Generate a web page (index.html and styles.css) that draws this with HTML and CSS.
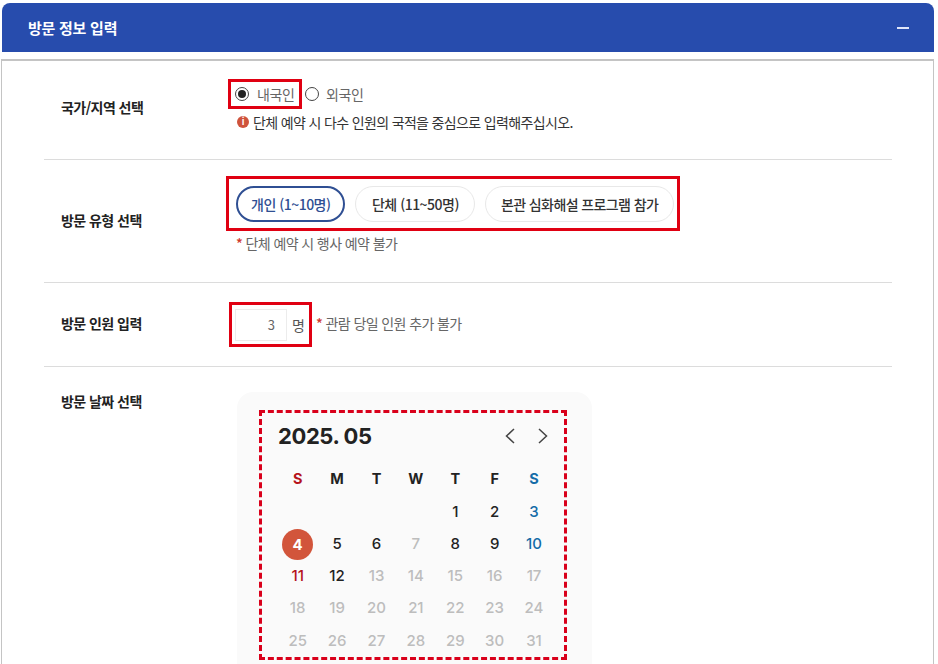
FILE: index.html
```html
<!DOCTYPE html>
<html lang="ko">
<head>
<meta charset="UTF-8" />
<meta name="viewport" content="width=device-width, initial-scale=1" />
<title>방문 정보 입력</title>
<link rel="stylesheet" href="styles.css">
</head>
<body>
<div class="page">
  <div class="head">
    <h2>방문 정보 입력</h2>
    <span class="fold"></span>
  </div>

  <div class="panel">
    <div class="row row-country">
      <div class="label">국가/지역 선택</div>
      <div class="field">
        <div class="radios">
          <div class="mark mark-radio">
            <span class="radio on"></span>
            <span class="radio-text">내국인</span>
          </div>
          <span class="radio"></span>
          <span class="radio-text">외국인</span>
        </div>
        <p class="info"><span class="info-icon">i</span>단체 예약 시 다수 인원의 국적을 중심으로 입력해주십시오.</p>
      </div>
    </div>

    <div class="row row-type">
      <div class="label">방문 유형 선택</div>
      <div class="field">
        <div class="mark mark-type">
          <button class="pill active">개인 (1~10명)</button>
          <button class="pill">단체 (11~50명)</button>
          <button class="pill pill-long">본관 심화해설 프로그램 참가</button>
        </div>
        <p class="note"><b>*</b> 단체 예약 시 행사 예약 불가</p>
      </div>
    </div>

    <div class="row row-count">
      <div class="label">방문 인원 입력</div>
      <div class="field count-field">
        <div class="mark mark-count">
          <span class="count-input">3</span>
          <span class="count-unit">명</span>
        </div>
        <p class="note"><b>*</b> 관람 당일 인원 추가 불가</p>
      </div>
    </div>

    <div class="row row-date">
      <div class="label">방문 날짜 선택</div>
      <div class="cal-card">
        <div class="cal-mark">
          <div class="cal-top">
            <strong>2025. 05</strong>
            <div class="cal-nav">
              <svg width="14" height="18" viewBox="0 0 14 18"><path d="M11 2 L3.5 9 L11 16" /></svg>
              <svg width="14" height="18" viewBox="0 0 14 18"><path d="M3 2 L10.5 9 L3 16" /></svg>
            </div>
          </div>
          <div class="cal-grid" id="calGrid"></div>
        </div>
      </div>
    </div>
  </div>
</div>

<script>
const calGrid = document.getElementById("calGrid");
const weekNames = ["S", "M", "T", "W", "T", "F", "S"];

weekNames.forEach((name, i) => {
  const cell = document.createElement("div");
  cell.className = "week";
  if (i === 0) cell.classList.add("sun");
  if (i === 6) cell.classList.add("sat");
  cell.textContent = name;
  calGrid.appendChild(cell);
});

// May 2025 starts on a Thursday
for (let i = 0; i < 4; i++) calGrid.appendChild(document.createElement("div"));

for (let day = 1; day <= 31; day++) {
  const cell = document.createElement("div");
  const weekday = (day + 3) % 7;
  cell.className = "day";
  if (day === 7 || day > 12) cell.classList.add("off");
  else if (weekday === 0) cell.classList.add("sun");
  else if (weekday === 6) cell.classList.add("sat");
  if (day === 4) cell.classList.add("picked");
  const num = document.createElement("span");
  num.textContent = day;
  cell.appendChild(num);
  calGrid.appendChild(cell);
}
</script>
</body>
</html>
```

FILE: styles.css
```css
html, body {
  margin: 0;
  padding: 0;
  height: 664px;
  overflow: hidden;
  background: #fff;
}
body {
  font-family: "Noto Sans CJK KR", "Noto Sans", sans-serif;
  color: #222;
}
.page {
  padding: 3px 4px 0 1px;
}
.head {
  margin-left: 1px;
  height: 49px;
  background: #274cad;
  border-radius: 8px 8px 0 0;
  display: flex;
  align-items: center;
  justify-content: space-between;
  padding: 0 25px 0 26px;
  box-sizing: border-box;
}
.head h2 {
  margin: 0;
  color: #fff;
  font-size: 15px;
  font-weight: 700;
  letter-spacing: -0.25px;
}
.fold {
  width: 12px;
  height: 2px;
  background: #dfe6fa;
}
.panel {
  margin-top: 7px;
  border: 1px solid #c4c4c4;
  border-top: 2px solid #c4c4c4;
  padding: 0 41px 0 42px;
}
.row {
  display: flex;
  border-bottom: 1px solid #dcdcdc;
  box-sizing: border-box;
}
.label {
  width: 182px;
  padding-left: 17px;
  box-sizing: border-box;
  font-size: 14px;
  font-weight: 700;
  letter-spacing: -0.55px;
  flex: none;
}
.row-country { height: 99px; padding-top: 18px; }
.row-country .label { padding-top: 18px; }
.row-type { height: 123px; padding-top: 16px; }
.row-type .label { padding-top: 34px; }
.row-count { height: 84px; padding-top: 19px; }
.row-count .label { padding-top: 11px; }
.row-date { border-bottom: 0; padding-top: 14px; }
.row-date .label { padding-top: 10px; }

.field { flex: 1; }
.mark {
  display: inline-flex;
  align-items: center;
  border: 3px solid #e00012;
  box-sizing: border-box;
}
.radios {
  display: flex;
  align-items: center;
  color: #666;
  margin-left: 2px;
}
.mark-radio {
  height: 30px;
  width: 74px;
  padding-left: 4px;
}
.radio {
  width: 14px;
  height: 14px;
  border: 1px solid #444;
  border-radius: 50%;
  background: #fff;
  box-sizing: border-box;
  flex: none;
  margin-left: 3px;
  display: flex;
  align-items: center;
  justify-content: center;
}
.radio.on::after {
  content: "";
  width: 8px;
  height: 8px;
  border-radius: 50%;
  background: #222;
}
.mark-radio .radio { margin-left: 0; }
.radio-text {
  font-size: 14px;
  margin-left: 7px;
  letter-spacing: -0.4px;
  color: #666;
}
.mark-radio .radio-text { margin-left: 8px; }
.info {
  margin: 3px 0 0 11px;
  font-size: 14px;
  letter-spacing: -0.65px;
  display: flex;
  align-items: center;
  color: #333;
}
.info-icon {
  width: 12px;
  height: 12px;
  border-radius: 50%;
  background: #cf533c;
  color: #fff;
  font-size: 9px;
  font-weight: 700;
  line-height: 12px;
  text-align: center;
  margin-right: 4px;
  letter-spacing: 0;
}
.mark-type {
  width: 454px;
  height: 55px;
  padding-left: 7px;
  gap: 10px;
}
.pill {
  height: 36px;
  padding: 0 15.5px;
  border: 1px solid #e8e8e8;
  border-radius: 18px;
  background: #fff;
  font-family: inherit;
  font-size: 14px;
  font-weight: 500;
  letter-spacing: -0.5px;
  color: #333;
  white-space: nowrap;
}
.pill-long {
  padding: 0 14.5px;
  letter-spacing: -0.6px;
}
.pill.active {
  border: 2px solid #2f4f93;
  color: #2f4f93;
  padding: 0 13px;
}
.note {
  margin: 2px 0 0 10px;
  font-size: 14px;
  letter-spacing: -0.6px;
  color: #666;
}
.note b { color: #cf3a2c; font-weight: 500; }
.count-field {
  display: flex;
  align-items: center;
  height: 45px;
}
.count-field .mark { margin-left: 3px; }
.count-field .note { margin: -4px 0 0 4px; }
.mark-count {
  width: 83px;
  height: 45px;
  padding: 3px 0 3px 3px;
}
.count-input {
  width: 52px;
  height: 32px;
  border: 1px solid #ececec;
  box-sizing: border-box;
  font-size: 13px;
  line-height: 30px;
  text-align: right;
  padding-right: 11px;
  color: #666;
  flex: none;
}
.count-unit {
  font-size: 14px;
  color: #555;
  margin-left: 5px;
}

.cal-card {
  width: 355px;
  height: 290px;
  margin-left: 11px;
  margin-top: 11px;
  background: #fafafa;
  border-radius: 16px;
  box-sizing: border-box;
  padding: 18px 0 0 22px;
}
.cal-mark {
  width: 308px;
  height: 250px;
  border: 3px dashed #d9001b;
  box-sizing: border-box;
  padding: 0 10px 0 16px;
  font-family: Inter, "Liberation Sans", sans-serif;
}
.cal-top {
  display: flex;
  align-items: center;
  justify-content: space-between;
  height: 44px;
  padding-top: 1px;
  box-sizing: border-box;
}
.cal-top strong {
  font-size: 22px;
  font-weight: 700;
  letter-spacing: -0.4px;
  color: #222;
}
.cal-nav {
  display: flex;
  gap: 19px;
  padding-right: 4px;
}
.cal-nav path {
  fill: none;
  stroke: #444;
  stroke-width: 1.5;
}
.cal-grid {
  display: grid;
  grid-template-columns: repeat(7, 39.4px);
  grid-template-rows: 33px 32px 32px 32px 32px 33px;
  margin-top: 6px;
  font-size: 15px;
  font-weight: 500;
  text-align: center;
  line-height: 32px;
}
.week { font-size: 14.5px; font-weight: 700; color: #222; }
.day { color: #222; display: flex; align-items: center; justify-content: center; }
.day.off { color: #bdbdbd; }
.sun { color: #b5121b; }
.sat { color: #146ca8; }
.day.picked span {
  width: 31px;
  height: 31px;
  line-height: 31px;
  border-radius: 50%;
  background: #d2553b;
  color: #fff;
  font-weight: 700;
  flex: none;
}
```
